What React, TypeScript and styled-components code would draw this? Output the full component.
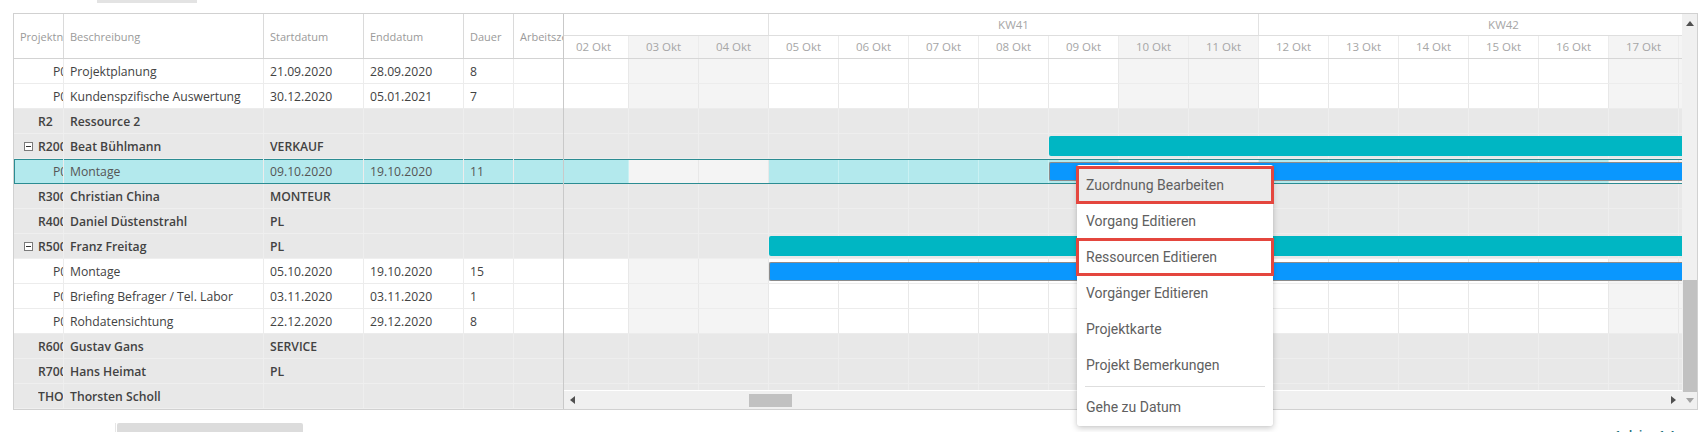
import React from "react";
import styled, { createGlobalStyle, css } from "styled-components";

const DAY_W = 70;

type Kind = "task" | "group";

interface GridRow {
  kind: Kind;
  code: string;
  desc: string;
  start?: string;
  end?: string;
  dauer?: string;
  expander?: boolean;
  selected?: boolean;
  bar?: { day: number; tone: "teal" | "blue" };
}

const headers = ["Projektnr", "Beschreibung", "Startdatum", "Enddatum", "Dauer", "Arbeitszeit"];

const rows: GridRow[] = [
  { kind: "task", code: "P0001", desc: "Projektplanung", start: "21.09.2020", end: "28.09.2020", dauer: "8" },
  { kind: "task", code: "P0002", desc: "Kundenspzifische Auswertung", start: "30.12.2020", end: "05.01.2021", dauer: "7" },
  { kind: "group", code: "R2", desc: "Ressource 2" },
  { kind: "group", code: "R200", desc: "Beat Bühlmann", start: "VERKAUF", expander: true, bar: { day: 7, tone: "teal" } },
  { kind: "task", code: "P0003", desc: "Montage", start: "09.10.2020", end: "19.10.2020", dauer: "11", selected: true, bar: { day: 7, tone: "blue" } },
  { kind: "group", code: "R300", desc: "Christian China", start: "MONTEUR" },
  { kind: "group", code: "R400", desc: "Daniel Düstenstrahl", start: "PL" },
  { kind: "group", code: "R500", desc: "Franz Freitag", start: "PL", expander: true, bar: { day: 3, tone: "teal" } },
  { kind: "task", code: "P0004", desc: "Montage", start: "05.10.2020", end: "19.10.2020", dauer: "15", bar: { day: 3, tone: "blue" } },
  { kind: "task", code: "P0005", desc: "Briefing Befrager / Tel. Labor", start: "03.11.2020", end: "03.11.2020", dauer: "1" },
  { kind: "task", code: "P0006", desc: "Rohdatensichtung", start: "22.12.2020", end: "29.12.2020", dauer: "8" },
  { kind: "group", code: "R600", desc: "Gustav Gans", start: "SERVICE" },
  { kind: "group", code: "R700", desc: "Hans Heimat", start: "PL" },
  { kind: "group", code: "THOS", desc: "Thorsten Scholl" },
];

// 02.10.2020 .. 18.10.2020
const days = Array.from({ length: 17 }, (_, i) => {
  const d = i + 2;
  const weekday = (5 + i) % 7; // 02.10.2020 is a Friday
  return { label: `${String(d).padStart(2, "0")} Okt`, weekend: weekday === 6 || weekday === 0 };
});

const weeks = [
  { label: "", days: 3 },
  { label: "KW41", days: 7 },
  { label: "KW42", days: 7 },
];

const menuItems = [
  { label: "Zuordnung Bearbeiten", active: true, marked: true },
  { label: "Vorgang Editieren" },
  { label: "Ressourcen Editieren", marked: true },
  { label: "Vorgänger Editieren" },
  { label: "Projektkarte" },
  { label: "Projekt Bemerkungen" },
  { label: "-" },
  { label: "Gehe zu Datum" },
];

const GlobalStyle = createGlobalStyle`
  body {
    margin: 0;
    background: #fff;
    font-family: "Open Sans", "Noto Sans", sans-serif;
  }
  * { box-sizing: border-box; }
`;

const Page = styled.div`
  position: relative;
  width: 1701px;
  height: 432px;
  overflow: hidden;
  background: #fff;
`;

const TopBar = styled.div`
  height: 13px;
  padding-left: 97px;
`;

const TopTab = styled.div`
  width: 100px;
  height: 3px;
  background: #e3e3e3;
`;

const Chart = styled.div`
  margin-left: 13px;
  width: 1685px;
  display: flex;
  border: 1px solid #d1d1d1;
`;

/* ---------- left grid ---------- */

const LeftPane = styled.div`
  flex: none;
  width: 550px;
  border-right: 1px solid #c9c9c9;
`;

const Columns = styled.div`
  display: grid;
  grid-template-columns: 50px 200px 100px 100px 50px 49px;
`;

const HeaderRow = styled(Columns)`
  height: 45px;
  border-bottom: 1px solid #d3d3d3;
`;

const HeadCell = styled.div`
  display: flex;
  align-items: center;
  padding: 0 0 0 6px;
  border-right: 1px solid #dadada;
  font-size: 11px;
  color: #9a9a9a;
  white-space: nowrap;
  overflow: hidden;
  &:last-child {
    border-right: none;
  }
`;

const BodyRow = styled(Columns)<{ $kind: Kind; $selected?: boolean }>`
  height: 25px;
  border-bottom: 1px solid #ececec;
  background: ${(p) => (p.$kind === "group" ? "#e8e8e8" : "#fff")};
  color: #424242;
  font-size: 12.2px;
  font-weight: ${(p) => (p.$kind === "group" ? 600 : 400)};
  ${(p) =>
    p.$kind === "group" &&
    css`
      border-bottom-color: #efefef;
    `}
  ${(p) =>
    p.$selected &&
    css`
      background: #b3e9ed;
      border-bottom-color: #2b8c92;
      box-shadow: inset 0 1px 0 #2b8c92, inset 1px 0 0 #2b8c92;
      color: #555;
    `}
`;

const Cell = styled.div<{ $group?: boolean }>`
  display: flex;
  align-items: center;
  padding-left: 6px;
  border-right: 1px solid ${(p) => (p.$group ? "#eeeeee" : "#ececec")};
  white-space: nowrap;
  overflow: hidden;
  &:last-child {
    border-right: none;
  }
`;

const CodeCell = styled(Cell)<{ $indent: number }>`
  padding-left: ${(p) => p.$indent}px;
`;

const Expander = styled.span`
  position: relative;
  flex: none;
  width: 9px;
  height: 9px;
  margin-right: 5px;
  border: 1px solid #7a7a7a;
  background: #fff;
  &::after {
    content: "";
    position: absolute;
    left: 1px;
    right: 1px;
    top: 3px;
    height: 1px;
    background: #333;
  }
`;

const CodeText = styled.span`
  overflow: hidden;
`;

/* ---------- gantt ---------- */

const GanttPane = styled.div`
  flex: none;
  width: 1118px;
  display: flex;
  flex-direction: column;
  overflow: hidden;
`;

const Timeline = styled.div`
  margin-left: -5px;
  width: ${days.length * DAY_W}px;
`;

const WeekRow = styled.div`
  display: flex;
  height: 22px;
  border-bottom: 1px solid #dedede;
`;

const WeekCell = styled.div<{ $days: number }>`
  flex: none;
  width: ${(p) => p.$days * DAY_W}px;
  border-right: 1px solid #e2e2e2;
  text-align: center;
  line-height: 21px;
  font-size: 11.5px;
  color: #a6a6a6;
`;

const DayRow = styled.div`
  display: flex;
  height: 23px;
  border-bottom: 1px solid #d6d6d6;
`;

const DayHead = styled.div<{ $weekend: boolean }>`
  flex: none;
  width: ${DAY_W}px;
  border-right: 1px solid #ececec;
  background: ${(p) => (p.$weekend ? "#f4f4f4" : "#fff")};
  text-align: center;
  line-height: 22px;
  font-size: 11.5px;
  color: #a6a6a6;
`;

const GanttBody = styled.div`
  height: 331px;
  overflow: hidden;
`;

const GanttRow = styled.div<{ $kind: Kind; $selected?: boolean }>`
  position: relative;
  display: flex;
  height: 25px;
  border-bottom: 1px solid ${(p) => (p.$kind === "group" ? "#eeeeee" : "#ececec")};
  background: ${(p) => (p.$kind === "group" ? "#e8e8e8" : "#fff")};
  ${(p) =>
    p.$selected &&
    css`
      border-bottom-color: #2b8c92;
      box-shadow: inset 0 1px 0 #2b8c92;
    `}
`;

const DayCell = styled.div<{ $kind: Kind; $weekend: boolean; $selected?: boolean }>`
  flex: none;
  width: ${DAY_W}px;
  border-right: 1px solid ${(p) => (p.$kind === "group" ? "#eeeeee" : "#e8e8e8")};
  ${(p) =>
    p.$kind === "task" &&
    p.$weekend &&
    css`
      background: #f4f4f4;
    `}
  ${(p) =>
    p.$selected &&
    !p.$weekend &&
    css`
      background: #b3e9ed;
      border-right-color: #c9f1f3;
    `}
  ${(p) =>
    p.$selected &&
    css`
      margin: 1px 0 0;
    `}
`;

const Bar = styled.div<{ $tone: "teal" | "blue" }>`
  position: absolute;
  right: 0;
  border-radius: 2px 0 0 2px;
  ${(p) =>
    p.$tone === "teal"
      ? css`
          top: 2px;
          height: 20px;
          background: #00b6c3;
        `
      : css`
          top: 3px;
          height: 19px;
          background: #0a97fe;
          border: 1px solid #8c8c8c;
          border-right: none;
        `}
`;

const HScroll = styled.div`
  display: flex;
  align-items: center;
  height: 19px;
  border-top: 1px solid #fff;
  background: #f0f0f0;
`;

const ArrowBox = styled.div<{ $w: number; $h: number }>`
  flex: none;
  width: ${(p) => p.$w}px;
  height: ${(p) => p.$h}px;
  display: flex;
  align-items: center;
  justify-content: center;
`;

const HTrack = styled.div`
  flex: 1;
  height: 100%;
  display: flex;
  align-items: center;
`;

const HThumb = styled.div`
  margin-left: 168px;
  width: 43px;
  height: 13px;
  background: #c1c1c1;
`;

const VScroll = styled.div`
  flex: none;
  width: 15px;
  display: flex;
  flex-direction: column;
  background: #f0f0f0;
`;

const VTrack = styled.div`
  flex: 1;
  display: flex;
  flex-direction: column;
  justify-content: flex-end;
  padding-left: 1px;
`;

const VThumb = styled.div`
  height: 112px;
  background: #c1c1c1;
`;

/* ---------- context menu ---------- */

const Menu = styled.div`
  position: absolute;
  left: 1077px;
  top: 165px;
  width: 196px;
  padding: 2px 0 1px;
  background: #fff;
  border-radius: 2px;
  box-shadow: 0 2px 6px rgba(0, 0, 0, 0.22), 0 0 1px rgba(0, 0, 0, 0.15);
  font-family: Roboto, "Noto Sans", sans-serif;
  font-size: 14px;
  color: #606060;
`;

const MenuItem = styled.div<{ $active?: boolean; $marked?: boolean }>`
  height: 36px;
  line-height: 36px;
  padding-left: 9px;
  white-space: nowrap;
  background: ${(p) => (p.$active ? "#ebebeb" : "transparent")};
  ${(p) =>
    p.$marked &&
    css`
      outline: 3px solid #e4463e;
      outline-offset: -2px;
    `}
`;

const MenuDivider = styled.div`
  height: 1px;
  margin: 3px 8px 2px;
  background: #dedede;
`;

/* ---------- footer ---------- */

const Footer = styled.div`
  display: flex;
  align-items: flex-start;
  height: 23px;
  margin-top: 13px;
  padding-left: 115px;
`;

const FooterDivider = styled.div`
  width: 1px;
  height: 10px;
  background: #e6e6e6;
`;

const FooterButton = styled.div`
  width: 186px;
  height: 12px;
  margin-left: 1px;
  background: #dcdcdc;
  border-radius: 2px 2px 0 0;
`;

const FooterText = styled.div`
  margin-left: auto;
  margin-right: 24px;
  margin-top: 3px;
  font-size: 13px;
  font-weight: 600;
  color: #1d6f7a;
  letter-spacing: 2px;
`;

const Arrow = ({ dir, color = "#505050" }: { dir: "up" | "down" | "left" | "right"; color?: string }) => {
  const pts = {
    up: "0,5 4,0 8,5",
    down: "0,0 8,0 4,5",
    left: "5,0 5,8 0,4",
    right: "0,0 0,8 5,4",
  }[dir];
  const vertical = dir === "up" || dir === "down";
  return (
    <svg width={vertical ? 8 : 5} height={vertical ? 5 : 8} viewBox={vertical ? "0 0 8 5" : "0 0 5 8"}>
      <polygon points={pts} fill={color} />
    </svg>
  );
};

const App = () => {
  return (
    <Page>
      <GlobalStyle />
      <TopBar>
        <TopTab />
      </TopBar>
      <Chart>
        <LeftPane>
          <HeaderRow>
            {headers.map((h) => (
              <HeadCell key={h}>{h}</HeadCell>
            ))}
          </HeaderRow>
          {rows.map((r, i) => {
            const group = r.kind === "group";
            const indent = group ? (r.expander ? 10 : 24) : 39;
            return (
              <BodyRow key={i} $kind={r.kind} $selected={r.selected}>
                <CodeCell $indent={indent} $group={group}>
                  {r.expander && <Expander />}
                  <CodeText>{r.code}</CodeText>
                </CodeCell>
                <Cell $group={group}>{r.desc}</Cell>
                <Cell $group={group}>{r.start}</Cell>
                <Cell $group={group}>{r.end}</Cell>
                <Cell $group={group}>{r.dauer}</Cell>
                <Cell $group={group} />
              </BodyRow>
            );
          })}
        </LeftPane>

        <GanttPane>
          <Timeline>
            <WeekRow>
              {weeks.map((w, i) => (
                <WeekCell key={i} $days={w.days}>
                  {w.label}
                </WeekCell>
              ))}
            </WeekRow>
            <DayRow>
              {days.map((d) => (
                <DayHead key={d.label} $weekend={d.weekend}>
                  {d.label}
                </DayHead>
              ))}
            </DayRow>
          </Timeline>
          <GanttBody>
            <Timeline>
              {rows.map((r, i) => (
                <GanttRow key={i} $kind={r.kind} $selected={r.selected}>
                  {days.map((d) => (
                    <DayCell key={d.label} $kind={r.kind} $weekend={d.weekend} $selected={r.selected} />
                  ))}
                  {r.bar && <Bar $tone={r.bar.tone} style={{ left: r.bar.day * DAY_W }} />}
                </GanttRow>
              ))}
            </Timeline>
          </GanttBody>
          <HScroll>
            <ArrowBox $w={17} $h={18}>
              <Arrow dir="left" />
            </ArrowBox>
            <HTrack>
              <HThumb />
            </HTrack>
            <ArrowBox $w={17} $h={18}>
              <Arrow dir="right" />
            </ArrowBox>
          </HScroll>
        </GanttPane>

        <VScroll>
          <ArrowBox $w={15} $h={18}>
            <Arrow dir="up" />
          </ArrowBox>
          <VTrack>
            <VThumb />
          </VTrack>
          <ArrowBox $w={15} $h={17}>
            <Arrow dir="down" color="#a3a3a3" />
          </ArrowBox>
        </VScroll>
      </Chart>

      <Footer>
        <FooterDivider />
        <FooterButton />
        <FooterText>1 bis 14</FooterText>
      </Footer>

      <Menu>
        {menuItems.map((m, i) =>
          m.label === "-" ? (
            <MenuDivider key={i} />
          ) : (
            <MenuItem key={i} $active={m.active} $marked={m.marked}>
              {m.label}
            </MenuItem>
          )
        )}
      </Menu>
    </Page>
  );
};

export default App;
